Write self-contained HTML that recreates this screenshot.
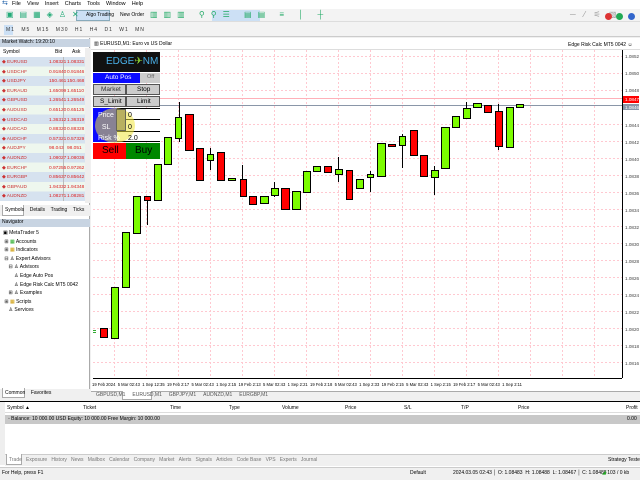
<!DOCTYPE html>
<html><head><meta charset="utf-8"><style>
*{margin:0;padding:0;box-sizing:border-box}
body{width:640px;height:480px;overflow:hidden;background:#f0f0f0;font-family:"Liberation Sans",sans-serif;font-size:6px;color:#000;position:relative}
.a{position:absolute}
.t{position:absolute;white-space:nowrap;font-size:5.5px;line-height:7px}
</style></head><body>
<div class="a" style="left:0;top:0;width:640px;height:9px;background:#fff"></div>
<div class="t" style="left:2px;top:0;color:#1e5fa8;font-size:7px">⇆</div>
<div class="t" style="left:12px;top:1px">File&nbsp;&nbsp;&nbsp;&nbsp;View&nbsp;&nbsp;&nbsp;&nbsp;Insert&nbsp;&nbsp;&nbsp;&nbsp;Charts&nbsp;&nbsp;&nbsp;&nbsp;Tools&nbsp;&nbsp;&nbsp;&nbsp;Window&nbsp;&nbsp;&nbsp;&nbsp;Help</div>
<div class="a" style="left:0;top:9px;width:640px;height:13px;background:#f3f3f3;border-bottom:1px solid #ddd"></div>
<div class="a" style="left:76px;top:10px;width:34px;height:11px;background:#cce0f5;border:1px solid #8ab"></div>
<div class="t" style="left:86px;top:12px;font-size:5px">Algo Trading</div>
<div class="t" style="left:120px;top:12px;font-size:5px">New Order</div>
<div class="a" style="left:212px;top:10px;width:48px;height:11px;background:#cce0f5"></div>
<div class="t" style="left:6px;top:11px;color:#2a7;font-size:8px;letter-spacing:6px">▣▤▦◈♙✕</div>
<div class="t" style="left:150px;top:11px;color:#2a6;font-size:8px;letter-spacing:6px">▥▥▥ ⚲⚲☰ ▤▤ ≡ │ ┼</div>
<div class="t" style="left:570px;top:11px;color:#999;font-size:8px;letter-spacing:3px">─ ⁄ ⚟ ▧</div>
<div class="a" style="left:605px;top:13px;width:7px;height:7px;border-radius:50%;background:#d33"></div>
<div class="a" style="left:616px;top:13px;width:7px;height:7px;border-radius:50%;background:#2a5"></div>
<div class="a" style="left:628px;top:13px;width:7px;height:7px;border-radius:50%;background:#36c"></div>
<div class="a" style="left:0;top:22px;width:640px;height:15px;background:#f3f3f3;border-bottom:1px solid #ccc"></div>
<div class="a" style="left:4px;top:25px;width:9px;height:10px;background:#cce0f5"></div>
<div class="t" style="left:6px;top:27px;letter-spacing:1px;word-spacing:4px;color:#333;font-size:5px">M1 M5 M15 M30 H1 H4 D1 W1 MN</div>
<div class="a" style="left:0;top:38px;width:90px;height:353px;background:#fff;border-right:1px solid #aaa"></div>
<div class="a" style="left:0;top:39px;width:90px;height:8px;background:#c8d4e2"></div>
<div class="t" style="left:2px;top:39px;font-size:5px">Market Watch: 19:20:10</div>
<div class="t" style="left:3px;top:49px;font-size:5px">Symbol</div><div class="t" style="left:55px;top:49px;font-size:5px">Bid</div><div class="t" style="left:72px;top:49px;font-size:5px">Ask</div>
<div class="a" style="left:0;top:57px;width:85px;height:144px;background:repeating-linear-gradient(#d6e2ef 0 9.6px,#eef7ee 9.6px 19.2px)"></div>
<div class="a" style="left:63px;top:57px;width:1px;height:144px;background:#bbb"></div>
<div class="a" style="left:85px;top:48px;width:5px;height:155px;background:#eee"></div>
<div class="t" style="left:2px;top:58px;line-height:9.6px;color:#c33;font-size:4.8px">
◆ EURUSD<br>◆ USDCHF<br>◆ USDJPY<br>◆ EURAUD<br>◆ GBPUSD<br>◆ AUDUSD<br>◆ USDCAD<br>◆ AUDCAD<br>◆ AUDCHF<br>◆ AUDJPY<br>◆ AUDNZD<br>◆ EURCHF<br>◆ EURGBP<br>◆ GBPAUD<br>◆ AUDNZD</div>
<div class="t" style="left:49px;top:58px;line-height:9.6px;color:#d22;font-size:4.8px">1.08321<br>0.91840<br>150.461<br>1.65099<br>1.26541<br>0.65120<br>1.36312<br>0.88320<br>0.57321<br>98.043<br>1.08027<br>0.97255<br>0.85637<br>1.94332<br>1.08271</div>
<div class="t" style="left:67px;top:58px;line-height:9.6px;color:#d22;font-size:4.8px">1.08331<br>0.91846<br>150.468<br>1.65110<br>1.26549<br>0.65125<br>1.36319<br>0.88328<br>0.57329<br>98.051<br>1.08036<br>0.97262<br>0.85642<br>1.94348<br>1.08281</div>
<div class="a" style="left:0;top:205px;width:90px;height:11px;background:#f0f0f0"></div>
<div class="a" style="left:2px;top:205px;width:22px;height:11px;background:#fff;border:1px solid #aaa;border-top:none"></div>
<div class="t" style="left:5px;top:207px;font-size:5px">Symbols&nbsp;&nbsp;&nbsp;&nbsp;Details&nbsp;&nbsp;&nbsp;&nbsp;Trading&nbsp;&nbsp;&nbsp;&nbsp;Ticks</div>
<div class="a" style="left:0;top:219px;width:90px;height:8px;background:#c8d4e2"></div>
<div class="t" style="left:2px;top:219px;font-size:5px">Navigator</div>
<div class="t" style="left:3px;top:229px;line-height:8.6px;font-size:5px">▣ MetaTrader 5<br>&nbsp;⊞ <span style="color:#2a2">▦</span> Accounts<br>&nbsp;⊞ <span style="color:#c90">▦</span> Indicators<br>&nbsp;⊟ ♙ Expert Advisors<br>&nbsp;&nbsp;&nbsp;&nbsp;⊟ ♙ Advisors<br>&nbsp;&nbsp;&nbsp;&nbsp;&nbsp;&nbsp;&nbsp;&nbsp;♙ Edge Auto Pos<br>&nbsp;&nbsp;&nbsp;&nbsp;&nbsp;&nbsp;&nbsp;&nbsp;♙ Edge Risk Calc MT5 0042<br>&nbsp;&nbsp;&nbsp;&nbsp;⊞ ♙ Examples<br>&nbsp;⊞ <span style="color:#c90">▦</span> Scripts<br>&nbsp;&nbsp;&nbsp;&nbsp;♙ Services</div>
<div class="a" style="left:0;top:389px;width:90px;height:10px;background:#f0f0f0"></div>
<div class="a" style="left:2px;top:388px;width:23px;height:10px;background:#fff;border:1px solid #aaa;border-top:none"></div>
<div class="t" style="left:5px;top:390px;font-size:5px">Common&nbsp;&nbsp;&nbsp;&nbsp;Favorites</div>
<div class="a" style="left:91px;top:38px;width:549px;height:353px;background:#fff"></div>
<div class="a" style="left:91px;top:38px;width:549px;height:12px;background:#fff;border-bottom:1px solid #ddd"></div>
<div class="t" style="left:94px;top:41px;font-size:5px">▥ EURUSD,M1: Euro vs US Dollar</div>
<div class="t" style="left:568px;top:42px;font-size:5px">Edge Risk Calc MT5 0042 ☺</div>
<svg class="a" style="left:90px;top:38px" width="550" height="354" viewBox="90 38 550 354">
<g stroke="#ffc8d0" stroke-width="1" stroke-dasharray="2,2">
<path d="M114.5 50V378M146.5 50V378M178.5 50V378M210.5 50V378M242.5 50V378M274.5 50V378M306.5 50V378M338.5 50V378M370.5 50V378M402.5 50V378M434.5 50V378M466.5 50V378M498.5 50V378M530.5 50V378M562.5 50V378M594.5 50V378"/>
<path d="M93 56.5H622M93 73.5H622M93 90.5H622M93 124.5H622M93 141.5H622M93 158.5H622M93 175.5H622M93 192.5H622M93 209.5H622M93 226.5H622M93 243.5H622M93 260.5H622M93 277.5H622M93 294.5H622M93 311.5H622M93 328.5H622M93 345.5H622M93 362.5H622"/>
</g>
<path d="M93 98.5H622" stroke="#ffb0b8"/>
<path d="M93 105.5H622" stroke="#8a96a8"/>
<path d="M622.5 50V378M93 378.5H622" stroke="#000"/>
<g stroke="#000" stroke-width="1">
<path d="M179.5 102V142M210.5 148V170M147.5 196V225M242.5 165V197M274.5 182V197M402.5 134V168M338.5 157V182M370.5 171V192M434.5 166V195M466.5 102V118M498.5 104V150"/>
</g>
<g stroke="#000" stroke-width="1" fill="#7cfc00">
<rect x="111.5" y="287.5" width="7" height="51"/><rect x="122.5" y="232.5" width="7" height="55"/><rect x="133.5" y="196.5" width="7" height="37"/>
<rect x="154.5" y="164.5" width="7" height="36"/><rect x="164.5" y="137.5" width="7" height="27"/><rect x="175.5" y="117.5" width="6" height="21"/>
<rect x="207.5" y="154.5" width="6" height="6"/><rect x="228.5" y="178.5" width="7" height="2"/><rect x="260.5" y="196.5" width="8" height="7"/>
<rect x="271.5" y="188.5" width="7" height="7"/><rect x="292.5" y="191.5" width="8" height="18"/><rect x="303.5" y="171.5" width="7" height="21"/>
<rect x="313.5" y="166.5" width="7" height="5"/><rect x="335.5" y="169.5" width="7" height="5"/><rect x="356.5" y="179.5" width="7" height="9"/>
<rect x="367.5" y="174.5" width="6" height="3"/><rect x="377.5" y="143.5" width="8" height="33"/><rect x="399.5" y="136.5" width="6" height="9"/>
<rect x="431.5" y="170.5" width="7" height="7"/><rect x="441.5" y="127.5" width="8" height="41"/><rect x="452.5" y="116.5" width="7" height="11"/>
<rect x="463.5" y="108.5" width="7" height="10"/><rect x="473.5" y="103.5" width="8" height="4"/><rect x="506.5" y="107.5" width="7" height="40"/>
<rect x="516.5" y="104.5" width="7" height="3"/>
</g>
<g stroke="#000" stroke-width="1" fill="#ff0000">
<rect x="100.5" y="328.5" width="7" height="9"/><rect x="144.5" y="196.5" width="6" height="4"/><rect x="185.5" y="114.5" width="8" height="36"/>
<rect x="196.5" y="148.5" width="7" height="32"/><rect x="217.5" y="152.5" width="7" height="28"/><rect x="240.5" y="179.5" width="6" height="17"/>
<rect x="249.5" y="196.5" width="7" height="8"/><rect x="281.5" y="188.5" width="8" height="21"/><rect x="324.5" y="166.5" width="7" height="6"/>
<rect x="346.5" y="170.5" width="6" height="29"/><rect x="388.5" y="144.5" width="7" height="2"/><rect x="410.5" y="130.5" width="7" height="25"/>
<rect x="420.5" y="155.5" width="7" height="21"/><rect x="484.5" y="105.5" width="7" height="7"/><rect x="495.5" y="111.5" width="7" height="35"/>
</g>
<rect x="93" y="330" width="3" height="1" fill="#3a3"/><rect x="93" y="332" width="3" height="1" fill="#3a3"/>
<rect x="623" y="96" width="16" height="7" fill="#f00"/><rect x="623" y="104" width="16" height="6" fill="#8a96a8"/>
<g font-family="Liberation Sans" font-size="4.6" fill="#444">
<text x="625" y="58">1.0852</text><text x="625" y="75">1.0850</text><text x="625" y="92">1.0848</text>
<text x="625" y="101" fill="#fff">1.0847</text><text x="625" y="109" fill="#fff">1.0846</text>
<text x="625" y="127">1.0844</text><text x="625" y="144">1.0842</text><text x="625" y="161">1.0840</text><text x="625" y="178">1.0838</text>
<text x="625" y="195">1.0836</text><text x="625" y="212">1.0834</text><text x="625" y="229">1.0832</text><text x="625" y="246">1.0830</text>
<text x="625" y="263">1.0828</text><text x="625" y="280">1.0826</text><text x="625" y="297">1.0824</text><text x="625" y="314">1.0822</text>
<text x="625" y="331">1.0820</text><text x="625" y="348">1.0818</text><text x="625" y="365">1.0816</text>
<text x="92" y="386" fill="#000" textLength="430" lengthAdjust="spacingAndGlyphs">19 Feb 2024&#160;&#160;5 Mar 02:43&#160;&#160;1 Sep 12:35&#160;&#160;19 Feb 2:17&#160;&#160;5 Mar 02:43&#160;&#160;1 Sep 2:15&#160;&#160;19 Feb 2:13&#160;&#160;5 Mar 02:43&#160;&#160;1 Sep 2:21&#160;&#160;19 Feb 2:18&#160;&#160;5 Mar 02:43&#160;&#160;1 Sep 2:33&#160;&#160;19 Feb 2:15&#160;&#160;5 Mar 02:43&#160;&#160;1 Sep 2:15&#160;&#160;19 Feb 2:17&#160;&#160;5 Mar 02:43&#160;&#160;1 Sep 2:11</text>
</g>
</svg>
<div class="a" style="left:93px;top:52px;width:67px;height:20px;background:#111"></div>
<div class="t" style="left:106px;top:56px;font-size:10px;line-height:11px;color:#4ab0e8">EDGE<span style="color:#8c3">✈</span>NM</div>
<div class="a" style="left:93px;top:73px;width:47px;height:10px;background:#0a0aff"></div>
<div class="t" style="left:105px;top:74px;color:#fff;font-size:6.5px">Auto Pos</div>
<div class="a" style="left:140px;top:73px;width:20px;height:10px;background:#ccc"></div>
<div class="t" style="left:147px;top:74px;color:#666">Off</div>
<div class="a" style="left:93px;top:84px;width:33px;height:11px;background:#ccc;border:1px solid #555"></div>
<div class="a" style="left:126px;top:84px;width:34px;height:11px;background:#ccc;border:1px solid #555"></div>
<div class="t" style="left:101px;top:86px;color:#333;font-size:6.5px">Market</div><div class="t" style="left:137px;top:86px;font-size:6.5px">Stop</div>
<div class="a" style="left:93px;top:96px;width:33px;height:11px;background:#ccc;border:1px solid #555"></div>
<div class="a" style="left:126px;top:96px;width:34px;height:11px;background:#ccc;border:1px solid #555"></div>
<div class="t" style="left:100px;top:98px;font-size:6.5px">S_Limit</div><div class="t" style="left:137px;top:98px;font-size:6.5px">Limit</div>
<div class="a" style="left:93px;top:108px;width:24px;height:34px;background:#0a0aff"></div>
<div class="a" style="left:117px;top:108px;width:43px;height:34px;background:#fff;border-top:1px solid #000;border-bottom:1px solid #000"></div>
<div class="a" style="left:117px;top:119px;width:43px;height:1px;background:#000"></div>
<div class="a" style="left:117px;top:131px;width:43px;height:1px;background:#000"></div>
<div class="a" style="left:95px;top:108px;width:40px;height:35px;border-radius:50%;background:rgba(240,230,60,.55)"></div>
<div class="a" style="left:116px;top:109px;width:10px;height:22px;background:#b8b060;border:1px solid #665"></div>
<div class="t" style="left:98px;top:110px;color:#fff;font-size:7px;line-height:11.5px">Price<br>&nbsp;&nbsp;SL<br>Risk %</div>
<div class="t" style="left:128px;top:110px;font-size:7px;line-height:11.5px">0<br>0<br>2.0</div>
<div class="a" style="left:93px;top:143px;width:33px;height:16px;background:#f00"></div>
<div class="a" style="left:126px;top:143px;width:34px;height:16px;background:#080"></div>
<div class="t" style="left:102px;top:145px;font-size:10px;line-height:12px">Sell</div>
<div class="t" style="left:135px;top:145px;font-size:10px;line-height:12px">Buy</div>
<div class="a" style="left:91px;top:391px;width:549px;height:10px;background:#f0f0f0;border-top:1px solid #aaa"></div>
<div class="a" style="left:122px;top:391px;width:30px;height:9px;background:#fff;border:1px solid #aaa;border-top:none"></div>
<div class="t" style="left:96px;top:392px;color:#555;font-size:5px">GBPUSD,M1&nbsp;&nbsp;&nbsp;&nbsp;&nbsp;EURUSD,M1&nbsp;&nbsp;&nbsp;&nbsp;&nbsp;GBPJPY,M1&nbsp;&nbsp;&nbsp;&nbsp;&nbsp;AUDNZD,M1&nbsp;&nbsp;&nbsp;&nbsp;&nbsp;EURGBP,M1</div>
<div class="a" style="left:0;top:401px;width:640px;height:66px;background:#fff;border-top:1px solid #000"></div>
<div class="a" style="left:0;top:402px;width:5px;height:63px;background:#eee"></div>
<div class="a" style="left:5px;top:404px;width:635px;height:9px;border-bottom:1px solid #ddd"></div>
<div class="t" style="left:7px;top:405px;font-size:5px">Symbol&nbsp;▲</div><div class="t" style="left:83px;top:405px;font-size:5px">Ticket</div><div class="t" style="left:170px;top:405px;font-size:5px">Time</div>
<div class="t" style="left:229px;top:405px;font-size:5px">Type</div><div class="t" style="left:282px;top:405px;font-size:5px">Volume</div><div class="t" style="left:345px;top:405px;font-size:5px">Price</div>
<div class="t" style="left:404px;top:405px;font-size:5px">S/L</div><div class="t" style="left:461px;top:405px;font-size:5px">T/P</div><div class="t" style="left:518px;top:405px;font-size:5px">Price</div><div class="t" style="left:626px;top:405px;font-size:5px">Profit</div>
<div class="a" style="left:5px;top:415px;width:635px;height:9px;background:#c8c8c8"></div>
<div class="t" style="left:8px;top:416px;font-size:5px">◦ Balance: 10 000.00 USD Equity: 10 000.00 Free Margin: 10 000.00</div>
<div class="t" style="left:627px;top:416px;font-size:5px">0.00</div>
<div class="a" style="left:5px;top:454px;width:635px;height:12px;background:#f0f0f0;border-top:1px solid #ccc"></div>
<div class="a" style="left:6px;top:454px;width:16px;height:11px;background:#fff;border:1px solid #aaa;border-top:none"></div>
<div class="t" style="left:9px;top:457px;color:#777;font-size:5px">Trade&nbsp;&nbsp;&nbsp;Exposure&nbsp;&nbsp;&nbsp;History&nbsp;&nbsp;&nbsp;News&nbsp;&nbsp;&nbsp;Mailbox&nbsp;&nbsp;&nbsp;Calendar&nbsp;&nbsp;&nbsp;Company&nbsp;&nbsp;&nbsp;Market&nbsp;&nbsp;&nbsp;Alerts&nbsp;&nbsp;&nbsp;Signals&nbsp;&nbsp;&nbsp;Articles&nbsp;&nbsp;&nbsp;Code Base&nbsp;&nbsp;&nbsp;VPS&nbsp;&nbsp;&nbsp;Experts&nbsp;&nbsp;&nbsp;Journal</div>
<div class="t" style="left:608px;top:457px;font-size:5px">Strategy Tester</div>
<div class="a" style="left:0;top:467px;width:640px;height:13px;background:#f0f0f0;border-top:1px solid #ccc"></div>
<div class="t" style="left:2px;top:470px;font-size:5px">For Help, press F1</div>
<div class="t" style="left:410px;top:470px;font-size:5px">Default</div>
<div class="t" style="left:453px;top:470px;font-size:5px">2024.03.05 02:43&nbsp;│ O: 1.08483&nbsp;&nbsp;H: 1.08488&nbsp;&nbsp;L: 1.08467&nbsp;│ C: 1.08488</div>
<div class="t" style="left:602px;top:470px;font-size:5px"><span style="color:#2a2">◢</span> 103 / 0 kb</div>
</body></html>
